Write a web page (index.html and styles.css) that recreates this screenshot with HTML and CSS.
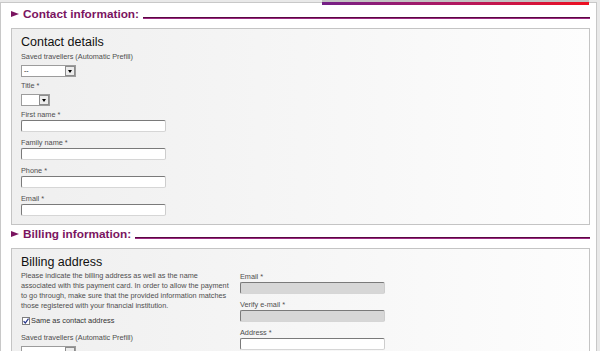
FILE: index.html
```html
<!DOCTYPE html>
<html>
<head>
<meta charset="utf-8">
<title>Contact information</title>
<link rel="stylesheet" href="styles.css">
</head>
<body>
<div class="accent"></div>
<div class="page">
  <div class="section-head">
    <span class="arrow"></span>
    <span class="section-title">Contact information:</span>
    <span class="rule"></span>
  </div>
  <div class="panel">
    <h2 class="panel-title">Contact details</h2>
    <div class="field field-select">
      <label class="label">Saved travellers (Automatic Prefill)</label>
      <div class="select select-wide"><span class="select-value">--</span><span class="select-btn"></span></div>
    </div>
    <div class="field field-select">
      <label class="label">Title *</label>
      <div class="select select-narrow"><span class="select-value"></span><span class="select-btn"></span></div>
    </div>
    <div class="field">
      <label class="label">First name *</label>
      <input class="input" type="text">
    </div>
    <div class="field">
      <label class="label">Family name *</label>
      <input class="input" type="text">
    </div>
    <div class="field">
      <label class="label">Phone *</label>
      <input class="input" type="text">
    </div>
    <div class="field">
      <label class="label">Email *</label>
      <input class="input" type="text">
    </div>
  </div>

  <div class="section-head section-head-next">
    <span class="arrow"></span>
    <span class="section-title">Billing information:</span>
    <span class="rule"></span>
  </div>
  <div class="panel">
    <h2 class="panel-title">Billing address</h2>
    <div class="cols">
      <div class="col-left">
        <p class="intro">Please indicate the billing address as well as the name associated with this payment card. In order to allow the payment to go through, make sure that the provided information matches those registered with your financial institution.</p>
        <div class="check-row">
          <span class="checkbox"><svg width="6" height="6" viewBox="0 0 6 6"><path d="M0.6 3.1 L2.3 5 L5.5 0.6" fill="none" stroke="#24348a" stroke-width="1.2"/></svg></span>
          <span class="check-text">Same as contact address</span>
        </div>
        <div class="field field-gap">
          <label class="label">Saved travellers (Automatic Prefill)</label>
          <div class="select select-wide"><span class="select-value"></span><span class="select-btn"></span></div>
        </div>
      </div>
      <div class="col-right">
        <div class="field">
          <label class="label">Email *</label>
          <input class="input input-disabled" type="text" disabled>
        </div>
        <div class="field">
          <label class="label">Verify e-mail *</label>
          <input class="input input-disabled" type="text" disabled>
        </div>
        <div class="field">
          <label class="label">Address *</label>
          <input class="input" type="text">
        </div>
      </div>
    </div>
  </div>
</div>
</body>
</html>
```
FILE: styles.css
```css
html {
  background: #e9e9e9;
  overflow: hidden;
}
body {
  margin: 0;
  position: relative;
  font-family: "Liberation Sans", Arial, sans-serif;
}
.accent {
  position: absolute;
  top: 0;
  left: 322px;
  width: 267px;
  height: 3px;
  border-top: 2px solid #c2c2c2;
  background: linear-gradient(to right, #742086, #b01860 50%, #ee1020);
  z-index: 2;
}
.page {
  margin: 2px 3px 0 0;
  border: 1px solid #c8c8c8;
  border-bottom: 0;
  background: #fff;
  padding: 4px 6px 0 10px;
  height: 345px;
  overflow: hidden;
}
.section-head {
  display: flex;
  align-items: flex-end;
  height: 14px;
  margin-bottom: 7px;
}
.section-head-next {
  margin-top: 2px;
}
.arrow {
  align-self: flex-start;
  margin-top: 4px;
  margin-right: 4px;
  width: 0;
  height: 0;
  border-left: 8px solid #7a1460;
  border-top: 3.5px solid transparent;
  border-bottom: 3.5px solid transparent;
}
.section-title {
  font-size: 11.8px;
  line-height: 14px;
  font-weight: bold;
  color: #7a1460;
  white-space: nowrap;
}
.rule {
  flex: 1;
  height: 0;
  margin: 0 0 2px 4px;
  border-top: 1px solid #5a0842;
  border-bottom: 1px solid #9c2a82;
}
.panel {
  border: 1px solid #c4c4c4;
  background: linear-gradient(to right, #efefef, #fdfdfd);
  padding: 6px 9px 8px;
}
.panel-title {
  margin: 0 0 2px;
  font-size: 12.5px;
  line-height: 15px;
  font-weight: normal;
  color: #111;
}
.label {
  display: block;
  font-size: 7.3px;
  line-height: 10px;
  color: #4e4e4e;
  white-space: nowrap;
}
.field + .field {
  margin-top: 6px;
}
.field-select + .field {
  margin-top: 4px;
}
.select {
  display: flex;
  box-sizing: border-box;
  height: 12px;
  margin-top: 3px;
  border: 1px solid #9c9c9c;
  background: #fff;
}
.select-wide {
  width: 55px;
}
.select-narrow {
  width: 29px;
}
.select-value {
  flex: 1;
  font-size: 7px;
  line-height: 9px;
  padding-left: 2px;
  color: #222;
}
.select-btn {
  box-sizing: border-box;
  width: 10px;
  border: 1px solid #8c8c8c;
  background: #ececec;
  display: flex;
  align-items: center;
  justify-content: center;
  padding-top: 1px;
}
.select-btn::after {
  content: "";
  width: 0;
  height: 0;
  border-top: 3px solid #000;
  border-left: 2.5px solid transparent;
  border-right: 2.5px solid transparent;
}
.input {
  display: block;
  box-sizing: border-box;
  width: 145px;
  height: 12px;
  margin: 0;
  padding: 0;
  border: 1px solid;
  border-color: #7a7a7a #cdcdcd #d6d6d6 #7a7a7a;
  border-radius: 2px;
  background: #fff;
  -webkit-appearance: none;
  appearance: none;
}
.input-disabled {
  background: #d7d7d7;
}
.cols {
  display: flex;
  gap: 7px;
}
.col-left {
  width: 212px;
}
.intro {
  margin: -1px 0 0;
  font-size: 7.3px;
  line-height: 10px;
  color: #4e4e4e;
}
.check-row {
  display: flex;
  align-items: center;
  height: 10px;
  margin-top: 5px;
}
.checkbox {
  box-sizing: border-box;
  width: 8px;
  height: 8px;
  margin: 0 1px 0 1px;
  border: 1px solid #7e7e7e;
  background: #fff;
  display: flex;
  align-items: center;
  justify-content: center;
}
.checkbox svg {
  display: block;
}
.check-text {
  font-size: 7.4px;
  line-height: 10px;
  color: #333;
}
.field-gap {
  margin-top: 7px;
}
```
